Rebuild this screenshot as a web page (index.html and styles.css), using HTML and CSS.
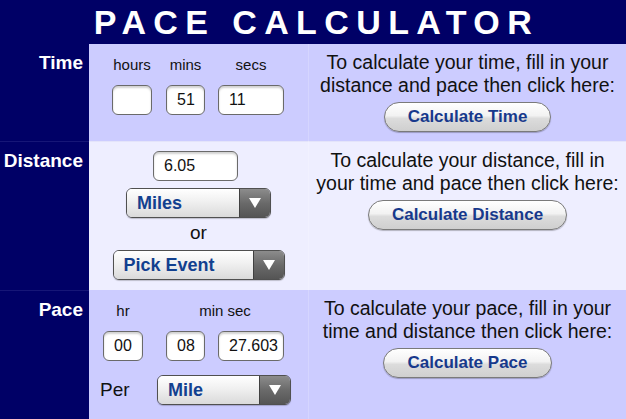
FILE: index.html
```html
<!DOCTYPE html>
<html>
<head>
<meta charset="utf-8">
<title>Pace Calculator</title>
<link rel="stylesheet" href="styles.css">
</head>
<body>
<div class="page">
  <h1 class="title">PACE CALCULATOR</h1>
  <div class="calc">
    <div class="label">Time</div>
    <div class="mid row-a">
      <div class="time-fields">
        <div class="field"><span class="lbl">hours</span><input class="box w40" type="text" value=""></div>
        <div class="field"><span class="lbl">mins</span><input class="box w39" type="text" value="51"></div>
        <div class="field"><span class="lbl">secs</span><input class="box w66" type="text" value="11"></div>
      </div>
    </div>
    <div class="right row-a">
      <p class="hint">To calculate your time, fill in your<br>distance and pace then click here:</p>
      <button class="calc-btn" type="button">Calculate Time</button>
    </div>

    <div class="label sep">Distance</div>
    <div class="mid row-b dist-mid">
      <input class="box w85 dist-input" type="text" value="6.05">
      <div class="select w145 miles"><span class="sel-text">Miles</span><span class="sel-arrow"></span></div>
      <div class="or">or</div>
      <div class="select w172"><span class="sel-text">Pick Event</span><span class="sel-arrow"></span></div>
    </div>
    <div class="right row-b">
      <p class="hint">To calculate your distance, fill in<br>your time and pace then click here:</p>
      <button class="calc-btn" type="button">Calculate Distance</button>
    </div>

    <div class="label sep">Pace</div>
    <div class="mid row-a pace-mid">
      <div class="pace-fields">
        <div class="field"><span class="lbl">hr</span><input class="box w40" type="text" value="00"></div>
        <div class="field"><span class="lbl">min sec</span>
          <div class="pair"><input class="box w39" type="text" value="08"><input class="box w66" type="text" value="27.603"></div>
        </div>
      </div>
      <div class="per">
        <span class="per-text">Per</span>
        <div class="select w134"><span class="sel-text">Mile</span><span class="sel-arrow"></span></div>
      </div>
    </div>
    <div class="right row-a">
      <p class="hint">To calculate your pace, fill in your<br>time and distance then click here:</p>
      <button class="calc-btn" type="button">Calculate Pace</button>
    </div>
  </div>
</div>
</body>
</html>
```
FILE: styles.css
```css
* { box-sizing: border-box; }
html, body {
  margin: 0;
  padding: 0;
  background: #000066;
  font-family: "Liberation Sans", Arial, Helvetica, sans-serif;
}
.page {
  width: 626px;
  height: 419px;
  overflow: hidden;
  background: #000066;
}
.title {
  margin: 0;
  height: 44px;
  line-height: 44px;
  font-size: 34px;
  font-weight: bold;
  color: #ffffff;
  text-align: center;
  letter-spacing: 7.4px;
  padding-left: 7px;
}
.calc {
  display: grid;
  grid-template-columns: 89px 219px 1fr;
  grid-template-rows: 97px 149px 1fr;
  height: 375px;
}
.label {
  background: #000066;
  color: #ffffff;
  font-weight: bold;
  font-size: 19px;
  line-height: 23px;
  text-align: right;
  padding: 7px 6px 0 0;
}
.label.sep { border-top: 1px solid #161677; }
.row-a { background: #ccccff; }
.row-b { background: #eeeeff; }
.right {
  border-left: 1px solid rgba(255,255,255,0.18);
  padding-top: 7px;
  display: flex;
  flex-direction: column;
  align-items: center;
}
.right.row-b, .mid.row-b { border-top: 1px solid #e4e4fa; }
.hint {
  margin: 0;
  font-size: 19.5px;
  line-height: 23px;
  color: #111111;
  text-align: center;
  white-space: nowrap;
}
.calc-btn {
  margin-top: 5px;
  height: 30px;
  padding: 0 23px;
  border: 1px solid #7a7a7a;
  border-radius: 15px;
  background: linear-gradient(#ffffff 0%, #f2f2f2 45%, #dcdcdc 55%, #cfcfcf 100%);
  box-shadow: 0 1px 1px rgba(0,0,0,0.25);
  color: #17398c;
  font-family: "Liberation Sans", Arial, Helvetica, sans-serif;
  font-weight: bold;
  font-size: 17px;
  line-height: 28px;
}
.lbl {
  font-size: 15px;
  line-height: 18px;
  color: #111111;
  white-space: nowrap;
}
.field {
  display: flex;
  flex-direction: column;
  align-items: center;
}
.field > .box { margin-top: 11px; }
.box {
  height: 30px;
  border: 1px solid #6a6a6a;
  border-radius: 6px;
  background: #ffffff;
  box-shadow: inset 0 2px 2px rgba(0,0,0,0.18);
  padding: 0 0 0 10px;
  font-family: "Liberation Sans", Arial, Helvetica, sans-serif;
  font-size: 16px;
  color: #111111;
  outline: none;
}
.w40 { width: 40px; }
.w39 { width: 39px; }
.w66 { width: 66px; }
.w85 { width: 85px; }
.w134 { width: 134px; }
.w145 { width: 145px; }
.w172 { width: 172px; }

.time-fields {
  display: flex;
  padding: 12px 0 0 23px;
}
.time-fields .field + .field { margin-left: 14px; }
.time-fields .field:last-child { margin-left: 13px; }

.dist-mid {
  display: flex;
  flex-direction: column;
  align-items: center;
  padding-top: 9px;
}
.dist-input { margin-right: 6px; }
.miles { margin-top: 7px; }
.or {
  font-size: 19px;
  line-height: 23px;
  color: #111111;
  margin-top: 3px;
  margin-bottom: 6px;
}
.select {
  display: flex;
  height: 30px;
  border: 1px solid #505050;
  border-radius: 6px;
  overflow: hidden;
  box-shadow: 0 1px 1px rgba(0,0,0,0.2);
}
.sel-text {
  flex: 1;
  background: linear-gradient(#ffffff 0%, #f0f0f0 45%, #dadada 100%);
  color: #12408f;
  font-weight: bold;
  font-size: 18px;
  line-height: 28px;
  padding-left: 10px;
}
.sel-arrow {
  width: 31px;
  border-left: 1px solid #404040;
  background: linear-gradient(#8c8c8c 0%, #6a6a6a 50%, #555555 100%);
  display: flex;
  align-items: center;
  justify-content: center;
}
.sel-arrow::after {
  content: "";
  width: 0;
  height: 0;
  border-left: 6px solid transparent;
  border-right: 6px solid transparent;
  border-top: 10px solid #ffffff;
}

.pace-mid { padding: 12px 0 0 0; }
.pace-fields {
  display: flex;
  padding-left: 14px;
}
.pace-fields .field + .field { margin-left: 23px; }
.pair { display: flex; margin-top: 11px; }
.pair .box + .box { margin-left: 13px; }
.per {
  display: flex;
  align-items: center;
  margin-top: 14px;
  padding-left: 11px;
}
.per-text {
  font-size: 19px;
  color: #111111;
  width: 57px;
}
```
